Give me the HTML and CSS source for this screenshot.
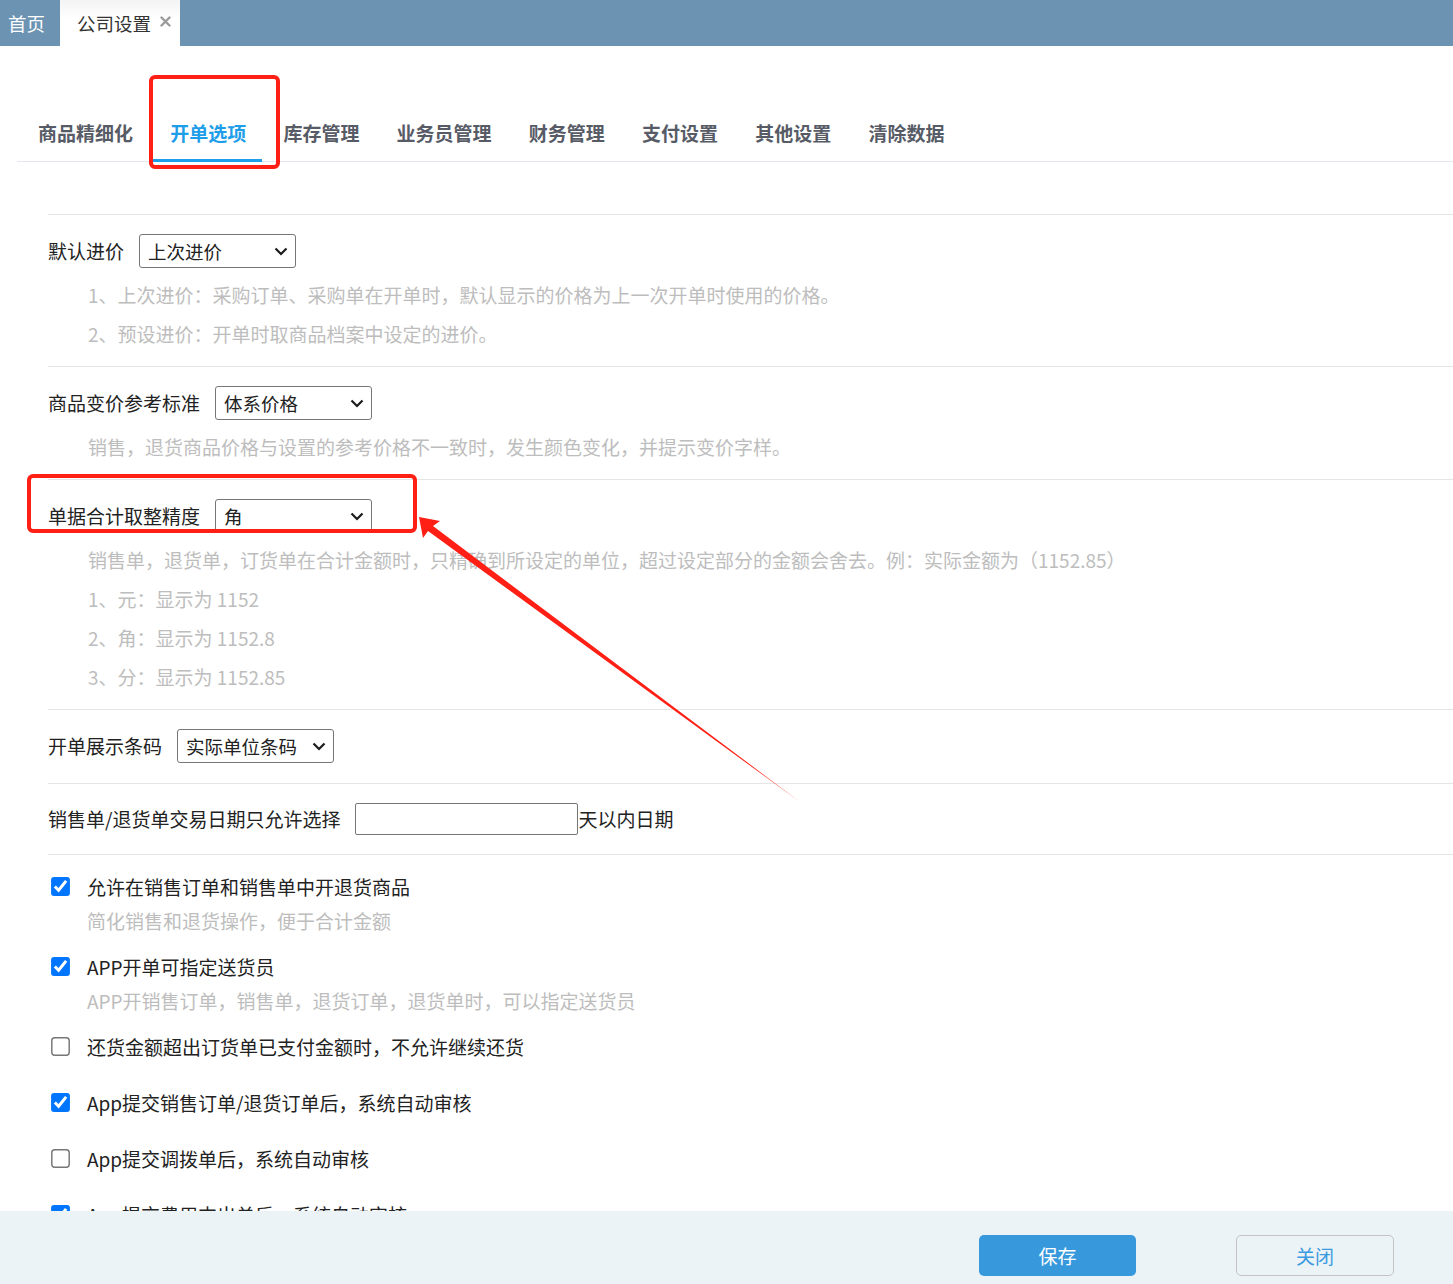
FILE: index.html
```html
<!DOCTYPE html>
<html lang="zh-CN">
<head>
    <meta charset="UTF-8">
    <meta name="viewport" content="width=device-width, initial-scale=1.0">
    <title>公司设置</title>
    <link rel="stylesheet" href="styles.css">
</head>
<body>
<div class="app">
    <!-- Top window tabs -->
    <div class="topbar">
        <div class="top-tab">首页</div>
        <div class="top-tab current">公司设置
            <svg class="tab-close" width="11" height="11" viewBox="0 0 11 11"><path d="M1.5 1.5 L9.5 9.5 M9.5 1.5 L1.5 9.5" stroke="#9a9a9a" stroke-width="2.4" stroke-linecap="round"/></svg>
        </div>
    </div>

    <div class="main">
        <!-- Settings tabs -->
        <ul class="tabs">
            <li>商品精细化</li>
            <li class="active">开单选项</li>
            <li>库存管理</li>
            <li>业务员管理</li>
            <li>财务管理</li>
            <li>支付设置</li>
            <li>其他设置</li>
            <li>清除数据</li>
        </ul>

        <div class="form">
            <div class="section has-notes">
                <div class="row">
                    <label class="row-label">默认进价</label>
                    <span class="select-wrap">
                        <select class="select">
                            <option>上次进价</option>
                            <option>预设进价</option>
                        </select>
                        <svg class="chevron" width="14" height="9" viewBox="0 0 14 9"><path d="M1.5 1.5 L7 7 L12.5 1.5" fill="none" stroke="#1a1a1a" stroke-width="2.2"/></svg>
                    </span>
                </div>
                <div class="notes">
                    <p>1、上次进价：采购订单、采购单在开单时，默认显示的价格为上一次开单时使用的价格。</p>
                    <p>2、预设进价：开单时取商品档案中设定的进价。</p>
                </div>
            </div>

            <div class="section has-notes">
                <div class="row">
                    <label class="row-label">商品变价参考标准</label>
                    <span class="select-wrap">
                        <select class="select">
                            <option>体系价格</option>
                        </select>
                        <svg class="chevron" width="14" height="9" viewBox="0 0 14 9"><path d="M1.5 1.5 L7 7 L12.5 1.5" fill="none" stroke="#1a1a1a" stroke-width="2.2"/></svg>
                    </span>
                </div>
                <div class="notes">
                    <p>销售，退货商品价格与设置的参考价格不一致时，发生颜色变化，并提示变价字样。</p>
                </div>
            </div>

            <div class="section has-notes">
                <div class="row">
                    <label class="row-label">单据合计取整精度</label>
                    <span class="select-wrap">
                        <select class="select">
                            <option>元</option>
                            <option selected>角</option>
                            <option>分</option>
                        </select>
                        <svg class="chevron" width="14" height="9" viewBox="0 0 14 9"><path d="M1.5 1.5 L7 7 L12.5 1.5" fill="none" stroke="#1a1a1a" stroke-width="2.2"/></svg>
                    </span>
                </div>
                <div class="notes">
                    <p>销售单，退货单，订货单在合计金额时，只精确到所设定的单位，超过设定部分的金额会舍去。例：实际金额为（1152.85）</p>
                    <p>1、元：显示为 1152</p>
                    <p>2、角：显示为 1152.8</p>
                    <p>3、分：显示为 1152.85</p>
                </div>
            </div>

            <div class="section">
                <div class="row">
                    <label class="row-label">开单展示条码</label>
                    <span class="select-wrap">
                        <select class="select">
                            <option>实际单位条码</option>
                        </select>
                        <svg class="chevron" width="14" height="9" viewBox="0 0 14 9"><path d="M1.5 1.5 L7 7 L12.5 1.5" fill="none" stroke="#1a1a1a" stroke-width="2.2"/></svg>
                    </span>
                </div>
            </div>

            <div class="section">
                <div class="row row-input">
                    <label class="row-label">销售单/退货单交易日期只允许选择</label>
                    <input type="text" class="days-input"><span>天以内日期</span>
                </div>
            </div>

            <div class="checks">
                <div class="check-item">
                    <label class="check-line"><input type="checkbox" checked>允许在销售订单和销售单中开退货商品</label>
                    <p class="check-note">简化销售和退货操作，便于合计金额</p>
                </div>
                <div class="check-item">
                    <label class="check-line"><input type="checkbox" checked>APP开单可指定送货员</label>
                    <p class="check-note">APP开销售订单，销售单，退货订单，退货单时，可以指定送货员</p>
                </div>
                <div class="check-item">
                    <label class="check-line"><input type="checkbox">还货金额超出订货单已支付金额时，不允许继续还货</label>
                </div>
                <div class="check-item">
                    <label class="check-line"><input type="checkbox" checked>App提交销售订单/退货订单后，系统自动审核</label>
                </div>
                <div class="check-item">
                    <label class="check-line"><input type="checkbox">App提交调拨单后，系统自动审核</label>
                </div>
                <div class="check-item">
                    <label class="check-line"><input type="checkbox" checked>App提交费用支出单后，系统自动审核</label>
                </div>
            </div>
        </div>
    </div>

    <!-- Bottom buttons -->
    <div class="footer">
        <button class="btn btn-save">保存</button>
        <button class="btn btn-close">关闭</button>
    </div>

    <!-- Red screenshot annotations -->
    <svg class="marks" width="1453" height="1284" viewBox="0 0 1453 1284">
        <rect x="151" y="77" width="127" height="90" rx="4" fill="none" stroke="#ff1f14" stroke-width="4"/>
        <rect x="29" y="476" width="386" height="55" rx="4" fill="none" stroke="#ff1f14" stroke-width="4"/>
        <polygon points="419,517 440,521 433,526 800,802 428,531 423,538" fill="#ff1f14"/>
    </svg>
</div>
</body>
</html>
```

FILE: styles.css
```css
* {
    box-sizing: border-box;
}

html, body {
    margin: 0;
    padding: 0;
}

body {
    font-family: "Noto Sans CJK SC", "Noto Sans", sans-serif;
    font-size: 19px;
    color: #222;
    background: #fff;
}

.app {
    position: relative;
    display: flex;
    flex-direction: column;
    height: 100vh;
    overflow: hidden;
}

/* Top window tabs */
.topbar {
    display: flex;
    height: 46px;
    background: #6d93b2;
    flex-shrink: 0;
}

.top-tab {
    display: flex;
    align-items: center;
    height: 46px;
    padding: 0 15px 0 8px;
    font-size: 18.5px;
    color: #fff;
}

.top-tab.current {
    width: 120px;
    padding: 0 0 0 17px;
    color: #333;
    background: linear-gradient(#f3f3f3, #fff 40%);
}

.tab-close {
    margin-left: 9px;
    margin-top: -4px;
}

/* Main area */
.main {
    flex: 1;
    overflow: hidden;
    padding-left: 17px;
}

.tabs {
    display: flex;
    list-style: none;
    margin: 67px 0 0;
    padding: 0 0 0 3px;
    border-bottom: 1px solid #e4e7ed;
}

.tabs li {
    position: relative;
    padding: 0 18.6px 8px;
    line-height: 40px;
    font-size: 19px;
    font-weight: bold;
    color: #575b66;
}

.tabs li:first-child {
    padding-left: 18px;
}

.tabs li.active {
    color: #1e9de8;
}

.tabs li.active::after {
    content: "";
    position: absolute;
    left: 1px;
    right: 3px;
    bottom: -1px;
    height: 3px;
    background: #1e9de8;
}

.form {
    margin-top: 52px;
    padding-left: 31px;
}

.section {
    border-top: 1px solid #e5e5e5;
    padding: 19px 0 20px;
}

.section.has-notes {
    padding-bottom: 13px;
}

.row {
    display: flex;
    align-items: center;
    height: 34px;
}

.row-input {
    height: 31px;
}

.row-label {
    margin-right: 15px;
    line-height: 30px;
}

.select-wrap {
    position: relative;
    display: inline-block;
    height: 34px;
}

.select {
    appearance: none;
    -webkit-appearance: none;
    width: 157px;
    height: 34px;
    padding: 0 4px 0 8px;
    font-family: inherit;
    font-size: 18.5px;
    color: #222;
    border: 1px solid #767676;
    border-radius: 3px;
    background-color: #fff;
}

.chevron {
    position: absolute;
    right: 8px;
    top: 13px;
    pointer-events: none;
}

.days-input {
    width: 223px;
    height: 32px;
    padding: 0 4px;
    border: 1px solid #767676;
    border-radius: 2px;
    font-family: inherit;
    font-size: 18px;
}

.notes {
    margin-top: 7px;
    padding-left: 40px;
}

.notes p {
    margin: 0;
    line-height: 39px;
    color: #bdbdbd;
}

/* Checkbox options */
.checks {
    border-top: 1px solid #e5e5e5;
    padding-top: 3px;
}

.check-item {
    padding: 5px 0;
}

.check-line {
    display: flex;
    align-items: center;
    height: 46px;
}

.check-line input {
    width: 13px;
    height: 13px;
    margin: 0 20.5px 0 5.5px;
    transform: scale(1.45);
}

.check-note {
    margin: 0;
    padding-left: 39px;
    line-height: 24px;
    color: #bdbdbd;
}

/* Footer */
.footer {
    display: flex;
    justify-content: flex-end;
    gap: 100px;
    height: 73px;
    flex-shrink: 0;
    padding: 24px 59px 0 0;
    background: #ecf3f7;
}

.btn {
    width: 157px;
    height: 41px;
    font-family: inherit;
    font-size: 19px;
    border-radius: 5px;
    cursor: pointer;
}

.btn-save {
    color: #fff;
    background: #3799dc;
    border: none;
}

.btn-close {
    width: 158px;
    color: #3b9ae0;
    background: transparent;
    border: 1px solid #c4c4c4;
}

.marks {
    position: absolute;
    top: 0;
    left: 0;
    pointer-events: none;
}
```
